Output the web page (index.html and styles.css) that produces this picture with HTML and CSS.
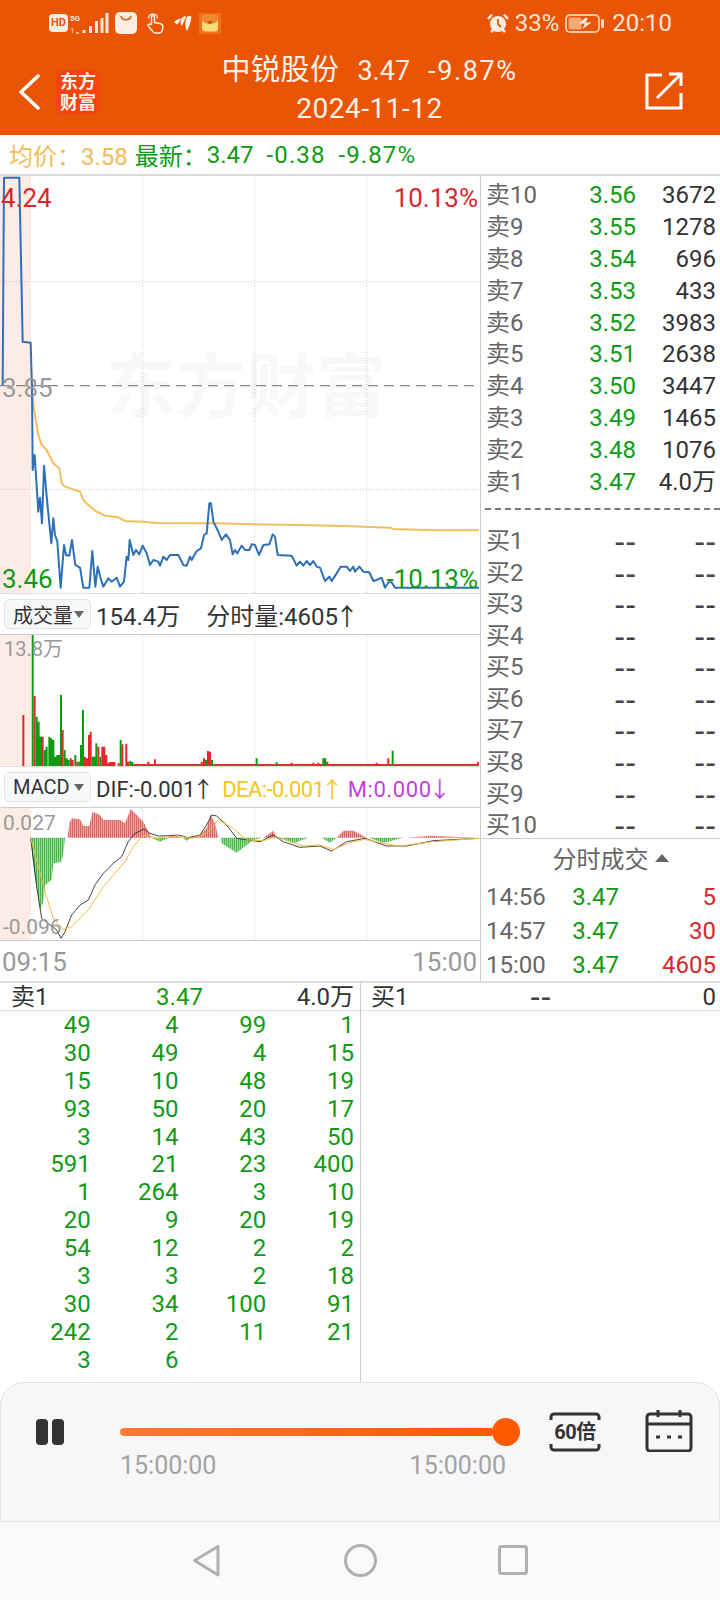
FILE: index.html
```html
<!DOCTYPE html>
<html lang="zh-CN">
<head>
    <meta charset="UTF-8">
    <meta name="viewport" content="width=device-width, initial-scale=1.0">
    <title>中锐股份 分时回放</title>
    <link rel="stylesheet" href="styles.css">
</head>
<body>
<div class="phone">
    <div class="header">
        <div class="status-bar">
            <div class="status-left">
                <span class="hd">HD</span>
                <svg class="ic-signal" viewBox="0 0 40 22"><text x="1" y="9" class="net">5G</text><text x="1" y="21" class="net net-dim">1</text><path d="M7 21h3" stroke="#f7b48c" stroke-width="2"/><path d="M15 21v-3M21.500 21v-7M27.500 21v-12M33 21v-15M38 21v-20" stroke="#fde9dc" stroke-width="3"/></svg>
                <svg class="ic-bag" viewBox="0 0 22 22"><rect width="22" height="22" rx="5" fill="#fdeee4"/><path d="M6 4c1 5 9 5 10 0" fill="none" stroke="#e95504" stroke-width="1.500"/></svg>
                <svg class="ic-hand" viewBox="0 0 18 22"><path d="M5.500 12V5a1.500 1.500 0 0 1 3 0v5.500l5.500 1c2 .4 3 1.500 2.800 3.500l-.5 3c-.3 2-1.500 3-3.300 3H9.500c-1.500 0-2.500-.7-3.200-2l-4-5c-1-1.500 1-2.500 2-1.500z" fill="none" stroke="#fdeee4" stroke-width="1.500"/><path d="M2.500 6.500a4.500 4.500 0 1 1 9 0" fill="none" stroke="#fdeee4" stroke-width="1.300"/></svg>
                <svg class="ic-wing" viewBox="0 0 18 15"><path d="M0 6.500C2 3.500 5 2.500 7 2.500 6 5 4.500 7 3.500 8.500zM8 1.500C10 .5 11 0 12 0 11 4 9 8 7.500 10 6 7 6.500 4 8 1.500zM13 .5c2-.5 3.500 0 4.500 0-.5 5-2 10-4.500 14.500C11 12 10.500 6 13 .5z" fill="#fdeee4"/></svg>
                <svg class="ic-packet" viewBox="0 0 22 21"><rect width="22" height="21" fill="#f0701c"/><rect x="3" y="2.500" width="16" height="16" rx="3" fill="#fcdc78"/><path d="M3 5.500a3 3 0 0 1 3-3h10a3 3 0 0 1 3 3V8c-5 4-11 4-16 0z" fill="#ef8a30"/><path d="M8 8h6l-3 3.500z" fill="#b95a18"/></svg>
            </div>
            <div class="status-right">
                <svg class="ic-alarm" viewBox="0 0 22 20"><path d="M1 6l4-4.500M21 6l-4-4.500M4 19l2.500-2.500M18 19l-2.500-2.500" stroke="#fdeee4" stroke-width="2.500"/><circle cx="11" cy="11" r="8" fill="#fdeee4"/><path d="M11 6v5l3 3" fill="none" stroke="#e95504" stroke-width="1.800"/></svg>
                <span>33%</span>
                <svg class="ic-battery" viewBox="0 0 39 19"><rect x="1" y="1" width="33" height="17" rx="4" fill="none" stroke="#fcc9a8" stroke-width="1.800"/><rect x="3.500" y="3.500" width="13" height="12" rx="1.500" fill="#f6a878"/><path d="M20 4l-6 5.500h6l-2.500 5.500 9-6.500h-6l2.500-4.500z" fill="#fdeee4"/><rect x="36" y="5" width="3" height="9" rx="1.500" fill="#fcd9c3"/></svg>
                <span class="clock">20:10</span>
            </div>
        </div>
        <div class="title-bar">
            <svg class="ic-back" viewBox="0 0 22 36"><path d="M20 2L3 18l17 16" fill="none" stroke="#fff" stroke-width="3.500" stroke-linecap="round" stroke-linejoin="round"/></svg>
            <div class="logo">东方<br>财富</div>
            <div class="title">
                <div class="title-main"><span class="title-name">中锐股份</span><span>3.47</span><span class="title-pct">-9.87%</span></div>
                <div class="title-date">2024-11-12</div>
            </div>
            <svg class="ic-share" viewBox="0 0 38 38"><path d="M17 3H2v33h34V21M36 14V2H24M35 3L12 26" fill="none" stroke="#fff" stroke-width="3"/></svg>
        </div>
    </div>

    <div class="quote">
        <span class="gold">均价：3.58</span>
        <span class="green label-new">最新：</span>
        <span class="green">3.47</span>
        <span class="green wide">-0.38</span>
        <span class="green wide">-9.87%</span>
    </div>

    <div class="market">
        <div class="charts">
            <div class="chart main-chart">
                <div class="watermark">东方财富</div>
                <svg viewBox="0 3 1440 1251">
                    <rect class="shade" x="0" y="3" width="93" height="1251"/>
                    <path class="grid" d="M428 3V1254M764 3V1254M1100 3V1254M0 320H1437M0 943H1437"/>
                    <path d="M0 632H1437" stroke="#888" stroke-width="3.500" stroke-dasharray="30 18" fill="none"/>
                    <polyline class="avg" points="95,640 103,710 115,780 125,810 140,825 160,865 178,880 185,925 195,935 240,950 250,975 265,990 290,1010 315,1022 355,1027 375,1038 430,1040 470,1044 640,1045 730,1047 900,1050 1030,1053 1170,1058 1180,1062 1280,1065 1437,1066"/>
                    <polyline class="price" points="8,630 12,8 58,8 68,500 92,503 96,640 98,885 104,840 115,1010 120,968 126,1045 132,872 142,985 154,1105 160,1030 165,1080 172,1100 182,1238 192,1110 198,1140 208,1142 216,1095 226,1170 240,1178 250,1238 268,1238 277,1128 286,1235 293,1175 302,1210 310,1235 325,1210 335,1220 350,1208 360,1235 372,1220 380,1145 385,1155 389,1095 400,1140 408,1125 418,1138 428,1112 440,1135 450,1170 460,1155 475,1160 480,1172 490,1145 500,1155 510,1140 535,1140 550,1170 560,1172 570,1145 575,1155 590,1128 603,1120 612,1080 620,1075 628,985 633,985 640,1040 655,1070 665,1095 678,1078 690,1095 698,1138 705,1125 712,1135 725,1112 735,1125 748,1125 755,1108 765,1110 777,1140 790,1110 808,1108 818,1078 825,1085 833,1140 875,1142 890,1172 900,1160 910,1172 920,1158 930,1170 940,1158 950,1175 960,1178 975,1218 988,1205 995,1218 1010,1195 1022,1175 1040,1175 1050,1188 1060,1175 1065,1190 1078,1175 1090,1190 1108,1192 1120,1218 1130,1215 1145,1208 1155,1238 1165,1222 1175,1222 1185,1238 1437,1238"/>
                </svg>
                <span class="tag tag-tl red">4.24</span>
                <span class="tag tag-tr red">10.13%</span>
                <span class="tag tag-ml gray">3.85</span>
                <span class="tag tag-bl green">3.46</span>
                <span class="tag tag-br green">-10.13%</span>
            </div>

            <div class="chart-bar">
                <div class="picker">成交量<i class="caret"></i></div>
                <span class="dark">154.4万</span>
                <span class="dark gap-left">分时量:4605<b class="arrow">↑</b></span>
            </div>

            <div class="chart volume-chart">
                <svg viewBox="0 135 1440 393">
                    <rect class="shade" x="0" y="135" width="93" height="393"/>
                    <path class="grid" d="M428 135V528M764 135V528M1100 135V528"/>
                    <path class="bars-red" d="M70 528V375M104 528V318M122 528V440M128 528V440M188 528V420M212 528V505M218 528V510M232 528V515M255 528V500M261 528V505M267 528V435M272 528V425M295 528V470M307 528V470M313 528V470M319 528V495M325 528V520M331 528V516M337 528V516M343 528V516M356 528V520M367 528V463M379 528V461M385 528V515M445 528V515M465 528V508M605 528V515M612 528V505M624 528V483M630 528V485M875 528V518M940 528V518M955 528V518M982 528V515M1130 528V518M1165 528V505M1434 528V516"/>
                    <path d="M400 525H1437" stroke="#e0302a" stroke-width="6"/>
                    <path class="bars-green" d="M98 528V135M110 528V380M116 528V395M122 528V440M134 528V480M140 528V470M148 528V440M154 528V445M160 528V450M166 528V500M172 528V495M178 528V495M183 528V315M194 528V480M200 528V505M206 528V510M226 528V495M238 528V515M243 528V465M249 528V360M278 528V500M283 528V500M289 528V460M301 528V500M362 528V450M391 528V512M397 528V516M618 528V510M636 528V510M770 528V505M830 528V517M970 528V505M976 528V505M1178 528V482"/>
                </svg>
                <span class="tag tag-vol gray">13.8万</span>
            </div>

            <div class="chart-bar macd-bar">
                <div class="picker">MACD<i class="caret"></i></div>
                <span class="dark">DIF:-0.001<b class="arrow">↑</b></span>
                <span class="yellow">DEA:-0.001<b class="arrow">↑</b></span>
                <span class="magenta">M:0.000<b class="arrow">↓</b></span>
            </div>

            <div class="chart macd-chart">
                <svg viewBox="0 654 1440 396">
                    <defs>
                        <pattern id="stripe-red" width="6" height="12" patternUnits="userSpaceOnUse"><rect width="6" height="12" fill="#fb9e9e"/><rect width="2" height="12" fill="#c24a4a"/></pattern>
                        <pattern id="stripe-green" width="6" height="12" patternUnits="userSpaceOnUse"><rect width="6" height="12" fill="#96e096"/><rect width="2" height="12" fill="#1f9f26"/></pattern>
                    </defs>
                    <rect class="shade" x="0" y="654" width="93" height="396"/>
                    <path class="grid" d="M428 654V1050M764 654V1050M1100 654V1050"/>
                    <path fill="url(#stripe-red)" d="M203 743L208 700 215 685 240 688 250 708 268 708 278 665 300 675 310 690 360 690 375 700 392 657 410 675 430 695 445 725 455 743zM500 743L520 735 545 743zM570 743L600 735 620 715 632 675 645 700 655 743zM790 743L820 722 830 743zM1010 743L1030 722 1060 722 1100 743zM1220 743L1290 737 1437 743z"/>
                    <path fill="url(#stripe-green)" d="M92 743H195L190 790 185 815 160 820 155 870 135 885 130 935 120 960 110 890 100 830zM455 743L480 755 505 743zM548 743L560 752 575 743zM662 743L665 760 710 788 760 750 790 743zM835 743L880 760 925 743zM965 743L990 758 1010 743zM1105 743L1150 758 1210 743z"/>
                    <polyline class="dif" points="92,743 110,890 125,985 150,1005 170,1020 183,1045 195,1025 215,975 240,945 265,930 285,885 310,850 340,820 365,800 385,755 405,730 432,717 450,730 475,738 510,737 535,735 565,743 600,735 620,705 635,675 650,678 680,705 710,745 780,755 820,735 850,755 900,772 960,768 995,783 1040,755 1095,745 1160,768 1220,768 1300,752 1437,745"/>
                    <polyline class="dea" points="92,743 135,905 160,985 190,1018 215,1010 265,960 310,890 375,815 400,770 430,735 470,745 530,738 575,745 620,730 655,690 700,715 740,750 790,752 830,740 910,768 960,765 1000,778 1050,758 1095,748 1160,762 1200,768 1300,755 1437,745"/>
                </svg>
                <span class="tag tag-macd-top gray">0.027</span>
                <span class="tag tag-macd-bottom gray">-0.096</span>
            </div>

            <div class="time-axis"><span>09:15</span><span>15:00</span></div>
        </div>

        <div class="book">
            <div class="book-rows">
                <div class="book-row"><span class="label">卖10</span><span class="green">3.56</span><span class="dark">3672</span></div>
                <div class="book-row"><span class="label">卖9</span><span class="green">3.55</span><span class="dark">1278</span></div>
                <div class="book-row"><span class="label">卖8</span><span class="green">3.54</span><span class="dark">696</span></div>
                <div class="book-row"><span class="label">卖7</span><span class="green">3.53</span><span class="dark">433</span></div>
                <div class="book-row"><span class="label">卖6</span><span class="green">3.52</span><span class="dark">3983</span></div>
                <div class="book-row"><span class="label">卖5</span><span class="green">3.51</span><span class="dark">2638</span></div>
                <div class="book-row"><span class="label">卖4</span><span class="green">3.50</span><span class="dark">3447</span></div>
                <div class="book-row"><span class="label">卖3</span><span class="green">3.49</span><span class="dark">1465</span></div>
                <div class="book-row"><span class="label">卖2</span><span class="green">3.48</span><span class="dark">1076</span></div>
                <div class="book-row"><span class="label">卖1</span><span class="green">3.47</span><span class="dark">4.0万</span></div>
            </div>
            <div class="book-split"></div>
            <div class="book-rows buy-rows">
                <div class="book-row"><span class="label">买1</span><span class="dash">--</span><span class="dash">--</span></div>
                <div class="book-row"><span class="label">买2</span><span class="dash">--</span><span class="dash">--</span></div>
                <div class="book-row"><span class="label">买3</span><span class="dash">--</span><span class="dash">--</span></div>
                <div class="book-row"><span class="label">买4</span><span class="dash">--</span><span class="dash">--</span></div>
                <div class="book-row"><span class="label">买5</span><span class="dash">--</span><span class="dash">--</span></div>
                <div class="book-row"><span class="label">买6</span><span class="dash">--</span><span class="dash">--</span></div>
                <div class="book-row"><span class="label">买7</span><span class="dash">--</span><span class="dash">--</span></div>
                <div class="book-row"><span class="label">买8</span><span class="dash">--</span><span class="dash">--</span></div>
                <div class="book-row"><span class="label">买9</span><span class="dash">--</span><span class="dash">--</span></div>
                <div class="book-row"><span class="label">买10</span><span class="dash">--</span><span class="dash">--</span></div>
            </div>
            <div class="trades">
                <div class="trades-title">分时成交<i class="caret-up"></i></div>
                <div class="trade-row"><span class="label">14:56</span><span class="green">3.47</span><span class="red">5</span></div>
                <div class="trade-row"><span class="label">14:57</span><span class="green">3.47</span><span class="red">30</span></div>
                <div class="trade-row"><span class="label">15:00</span><span class="green">3.47</span><span class="red">4605</span></div>
            </div>
        </div>
    </div>

    <div class="ticks">
        <div class="tick-side tick-sell">
            <div class="tick-head"><span class="dark">卖1</span><span class="green">3.47</span><span class="dark">4.0万</span></div>
            <div class="tick-grid">
                <span>49</span><span>4</span><span>99</span><span>1</span>
                <span>30</span><span>49</span><span>4</span><span>15</span>
                <span>15</span><span>10</span><span>48</span><span>19</span>
                <span>93</span><span>50</span><span>20</span><span>17</span>
                <span>3</span><span>14</span><span>43</span><span>50</span>
                <span>591</span><span>21</span><span>23</span><span>400</span>
                <span>1</span><span>264</span><span>3</span><span>10</span>
                <span>20</span><span>9</span><span>20</span><span>19</span>
                <span>54</span><span>12</span><span>2</span><span>2</span>
                <span>3</span><span>3</span><span>2</span><span>18</span>
                <span>30</span><span>34</span><span>100</span><span>91</span>
                <span>242</span><span>2</span><span>11</span><span>21</span>
                <span>3</span><span>6</span>
            </div>
        </div>
        <div class="tick-side tick-buy">
            <div class="tick-head"><span class="dark">买1</span><span class="dash">--</span><span class="dark">0</span></div>
        </div>
    </div>

    <div class="player">
        <div class="pause"><i></i><i></i></div>
        <div class="progress">
            <div class="track"><div class="knob"></div></div>
            <div class="progress-times"><span>15:00:00</span><span>15:00:00</span></div>
        </div>
        <div class="speed">
            <svg viewBox="0 0 52 40"><path d="M2 8V5a3 3 0 0 1 3-3h42a3 3 0 0 1 3 3v3M2 32v3a3 3 0 0 0 3 3h42a3 3 0 0 0 3-3v-3" fill="none" stroke="#333" stroke-width="3"/></svg>
            <span>60倍</span>
        </div>
        <svg class="ic-calendar" viewBox="0 0 48 43"><path d="M5 5h38a3 3 0 0 1 3 3v31a3 3 0 0 1-3 3H5a3 3 0 0 1-3-3V8a3 3 0 0 1 3-3zM2 15h44M13 1v7M35 1v7" fill="none" stroke="#333" stroke-width="3"/><path d="M11 28h4M22 28h4M33 28h4" stroke="#333" stroke-width="3"/></svg>
    </div>

    <div class="nav">
        <svg class="ic-nav-back" viewBox="0 0 28 33"><path d="M26 2.500L2.500 16.500 26 31z" fill="none" stroke="#b0b0b0" stroke-width="3" stroke-linejoin="round"/></svg>
        <svg class="ic-nav-home" viewBox="0 0 33 33"><circle cx="16.500" cy="16.500" r="15" fill="none" stroke="#b0b0b0" stroke-width="3"/></svg>
        <svg class="ic-nav-recent" viewBox="0 0 30 30"><rect x="1.500" y="1.500" width="27" height="27" rx="2" fill="none" stroke="#b0b0b0" stroke-width="3"/></svg>
    </div>
</div>
</body>
</html>
```

FILE: styles.css
```css
* {
    margin: 0;
    padding: 0;
    box-sizing: border-box;
}

body {
    font-family: Roboto, "Noto Sans CJK SC", sans-serif;
    background: #fff;
}

.phone {
    width: 720px;
    height: 1600px;
    display: flex;
    flex-direction: column;
    overflow: hidden;
    font-size: 24px;
}

.green { color: #0f9a14; }
.red { color: #d8282d; }
.gold { color: #f0bc58; }
.gray { color: #999; }
.dark { color: #333; }
.yellow { color: #f3c51f; }
.magenta { color: #c93ed8; }

.dash {
    font-family: "DejaVu Sans", sans-serif;
    font-size: 30px;
    color: #444;
}

/* header */
.header {
    height: 135px;
    background: #e95504;
    color: #fff;
    flex-shrink: 0;
}

.status-bar {
    height: 46px;
    display: flex;
    justify-content: space-between;
    align-items: center;
    padding: 0 48px 0 49px;
}

.status-left,
.status-right {
    display: flex;
    align-items: center;
}

.status-right {
    color: #fde4d4;
    font-size: 24px;
}

.hd {
    width: 19px;
    height: 18px;
    border-radius: 4px;
    background: #fdeee4;
    color: #e95504;
    font-size: 11px;
    font-weight: 700;
    line-height: 18px;
    text-align: center;
}

.net {
    font-size: 8px;
    font-weight: 700;
    fill: #fde9dc;
}

.net-dim { fill: #f7b48c; }

.ic-signal { width: 40px; height: 22px; margin-left: 1px; }
.ic-bag { width: 22px; height: 22px; margin-left: 6px; }
.ic-hand { width: 18px; height: 22px; margin-left: 9px; }
.ic-wing { width: 18px; height: 15px; margin-left: 10px; }
.ic-packet { width: 22px; height: 21px; margin-left: 7px; }
.ic-alarm { width: 22px; height: 20px; margin-right: 6px; }
.ic-battery { width: 39px; height: 19px; margin: 0 8px 0 6px; }

.title-bar {
    height: 89px;
    display: flex;
    align-items: center;
    padding: 0 37px 0 18px;
}

.ic-back { width: 22px; height: 36px; margin-top: 2px; }

.logo {
    width: 44px;
    height: 44px;
    margin: 2px 0 0 16px;
    border-radius: 7px;
    background: #f4440f;
    color: #fff2ea;
    font-size: 18px;
    font-weight: 700;
    line-height: 21px;
    text-align: center;
    padding-top: 1px;
}

.title {
    flex: 1;
    text-align: center;
    margin-right: 6px;
}

.title-main {
    display: flex;
    justify-content: center;
    align-items: baseline;
    gap: 18px;
    font-size: 27px;
    line-height: 36px;
    color: #fff2ea;
}

.title-name { font-size: 29px; letter-spacing: .5px; }
.title-pct { letter-spacing: 1.6px; }

.title-date {
    font-size: 28px;
    line-height: 40px;
    letter-spacing: .5px;
    color: #fff2ea;
}

.ic-share { width: 38px; height: 38px; }

/* quote line */
.quote {
    height: 41px;
    display: flex;
    align-items: center;
    gap: 13px;
    padding-left: 9px;
    border-bottom: 2px solid #ddd;
    flex-shrink: 0;
}

.quote .gold { margin-right: -6px; }
.quote .label-new { margin-right: -13px; }
.quote .wide { letter-spacing: 1.100px; }

/* market area */
.market {
    height: 805px;
    display: flex;
    flex-shrink: 0;
}

.charts {
    width: 481px;
    border-right: 1px solid #ccc;
    flex-shrink: 0;
    display: flex;
    flex-direction: column;
}

.chart {
    position: relative;
    width: 480px;
    overflow: hidden;
}

.chart svg {
    display: block;
    position: relative;
    width: 480px;
    height: 100%;
}

.main-chart { height: 417px; }
.volume-chart { height: 131px; }
.macd-chart { height: 132px; }

.shade { fill: #fdece6; }

.watermark {
    position: absolute;
    left: 106px;
    top: 177px;
    font-size: 70px;
    line-height: 70px;
    font-weight: 700;
    color: #f8f8f8;
    white-space: nowrap;
}

.grid {
    fill: none;
    stroke: #c9c9c9;
    stroke-width: 3;
    stroke-dasharray: 3 5;
}

.avg,
.price,
.dif,
.dea {
    fill: none;
    stroke-linejoin: round;
}

.avg { stroke: #f2bd5c; stroke-width: 6; }
.price { stroke: #2f6fb5; stroke-width: 6; }
.dif { stroke: #222; stroke-width: 2.500; }
.dea { stroke: #f0be3c; stroke-width: 3; }

.bars-red,
.bars-green {
    fill: none;
    stroke-width: 6;
}

.bars-red { stroke: #e6262a; }
.bars-green { stroke: #0f9a14; }

.tag {
    position: absolute;
    font-size: 26px;
    line-height: 30px;
    white-space: nowrap;
}

.tag-tl { left: 1px; top: 7px; }
.tag-tr { right: 2px; top: 7px; }
.tag-ml { left: 2px; top: 197px; }
.tag-bl { left: 2px; top: 388px; }
.tag-br { right: 2px; top: 388px; }
.tag-vol { left: 4px; top: -1px; font-size: 20px; }
.tag-macd-top { left: 3px; top: 0; font-size: 21px; }
.tag-macd-bottom { left: 3px; top: 104px; font-size: 21px; }

.chart-bar {
    height: 42px;
    display: flex;
    align-items: center;
    gap: 4px;
    border-top: 1px solid #ddd;
    border-bottom: 1px solid #ccc;
    padding-left: 4px;
    white-space: nowrap;
}

.gap-left { margin-left: 22px; }

.picker {
    width: 87px;
    height: 30px;
    display: flex;
    align-items: center;
    justify-content: space-between;
    padding: 0 6px 0 8px;
    margin-right: 1px;
    border: 1px solid #dfe1e5;
    border-radius: 5px;
    background: #f7f8fa;
    color: #333;
    font-size: 20px;
}

.caret {
    width: 0;
    height: 0;
    border-left: 5px solid transparent;
    border-right: 5px solid transparent;
    border-top: 7px solid #666;
}

.arrow {
    font-family: "Noto Sans CJK SC", sans-serif;
    font-weight: 400;
    margin: 0 -4px 0 -3px;
}

.macd-bar { font-size: 22px; }
.macd-bar .yellow { margin-left: 8px; letter-spacing: -.6px; }
.macd-bar .magenta { margin-left: 5px; letter-spacing: .6px; }

.time-axis {
    height: 41px;
    display: flex;
    justify-content: space-between;
    align-items: center;
    padding: 2px 3px 0 2px;
    width: 480px;
    border-top: 1px solid #ccc;
    font-size: 26px;
    color: #999;
}

/* order book */
.book {
    flex: 1;
    display: flex;
    flex-direction: column;
    padding-top: 4px;
}

.book-rows {
    padding: 0 4px 0 5px;
}

.book-row,
.trade-row {
    display: grid;
    grid-template-columns: 60px 1fr 80px;
    height: 31.900px;
    line-height: 31.900px;
    white-space: nowrap;
}

.book-row span:nth-child(n+2),
.trade-row span:nth-child(n+2) {
    text-align: right;
}

.label { color: #666; }

.book-split {
    margin: 9px 0 16px 4px;
    height: 0;
    border-top: 2px dashed #777;
}

.buy-rows {
    height: 312px;
}

.buy-rows .book-row {
    height: 31.600px;
    line-height: 31.600px;
}

.trades {
    flex: 1;
    border-top: 1px solid #ccc;
}

.trades-title {
    display: flex;
    align-items: center;
    justify-content: center;
    gap: 6px;
    height: 38px;
    margin-left: 20px;
    color: #666;
}

.caret-up {
    width: 0;
    height: 0;
    border-left: 7px solid transparent;
    border-right: 7px solid transparent;
    border-bottom: 8px solid #666;
}

.trade-row {
    grid-template-columns: 59px 74px 1fr;
    padding: 3px 4px 0 5px;
    height: 34px;
    line-height: 34px;
}

/* tick tables */
.ticks {
    height: 402px;
    display: flex;
    border-top: 2px solid #ddd;
    flex-shrink: 0;
}

.tick-side {
    display: flex;
    flex-direction: column;
}

.tick-sell {
    width: 361px;
    border-right: 1px solid #ccc;
}

.tick-buy {
    flex: 1;
}

.tick-head {
    height: 28px;
    display: grid;
    grid-template-columns: 1fr 1fr 1fr;
    align-items: center;
    border-bottom: 1px solid #ddd;
    padding: 0 6px 0 11px;
    line-height: 28px;
}

.tick-head span:nth-child(2) {
    text-align: center;
    margin-left: -6px;
}

.tick-head span:nth-child(3) {
    text-align: right;
}

.tick-buy .tick-head {
    padding: 0 4px 0 10px;
}

.tick-grid {
    display: grid;
    grid-template-columns: repeat(4, 1fr);
    grid-auto-rows: 27.900px;
    padding: 1px 6px 0 3px;
    line-height: 27.900px;
    color: #0f9a14;
    text-align: right;
}

/* replay player */
.player {
    height: 140px;
    margin-top: -1px;
    display: flex;
    align-items: flex-start;
    background: #f7f7f9;
    border: 1px solid #e2e2e4;
    border-radius: 24px 24px 0 0;
    padding: 36px 0 0 35px;
    flex-shrink: 0;
}

.pause {
    display: flex;
    gap: 4px;
    width: 28px;
    height: 26px;
}

.pause i {
    width: 12px;
    height: 26px;
    border-radius: 4px;
    background: #333;
}

.progress {
    width: 429px;
    margin: -2px 0 0 56px;
}

.track {
    position: relative;
    height: 8px;
    margin-top: 11px;
    width: 372px;
    border-radius: 4px 0 0 4px;
    background: linear-gradient(90deg, #ff7a33, #fe5a00);
}

.knob {
    position: absolute;
    right: -28px;
    top: -10px;
    width: 28px;
    height: 28px;
    border-radius: 50%;
    background: #fe5a00;
}

.progress-times {
    display: flex;
    justify-content: space-between;
    width: 386px;
    margin-top: 15px;
    font-size: 25px;
    line-height: 30px;
    color: #a2a2a2;
}

.speed {
    position: relative;
    width: 52px;
    height: 40px;
    margin-top: -7px;
}

.speed svg {
    display: block;
    width: 52px;
    height: 40px;
}

.speed span {
    position: absolute;
    left: 0;
    right: 0;
    top: 7px;
    text-align: center;
    font-size: 20px;
    font-weight: 700;
    line-height: 26px;
    letter-spacing: -.5px;
    color: #333;
}

.ic-calendar {
    width: 48px;
    height: 43px;
    margin: -10px 0 0 44px;
}

.nav {
    flex: 1;
    display: flex;
    justify-content: center;
    align-items: center;
    background: #fafafa;
    padding-bottom: 2px;
}

.ic-nav-back { width: 28px; height: 33px; }
.ic-nav-home { width: 33px; height: 33px; margin-left: 124px; }
.ic-nav-recent { width: 30px; height: 30px; margin-left: 121px; }
```
